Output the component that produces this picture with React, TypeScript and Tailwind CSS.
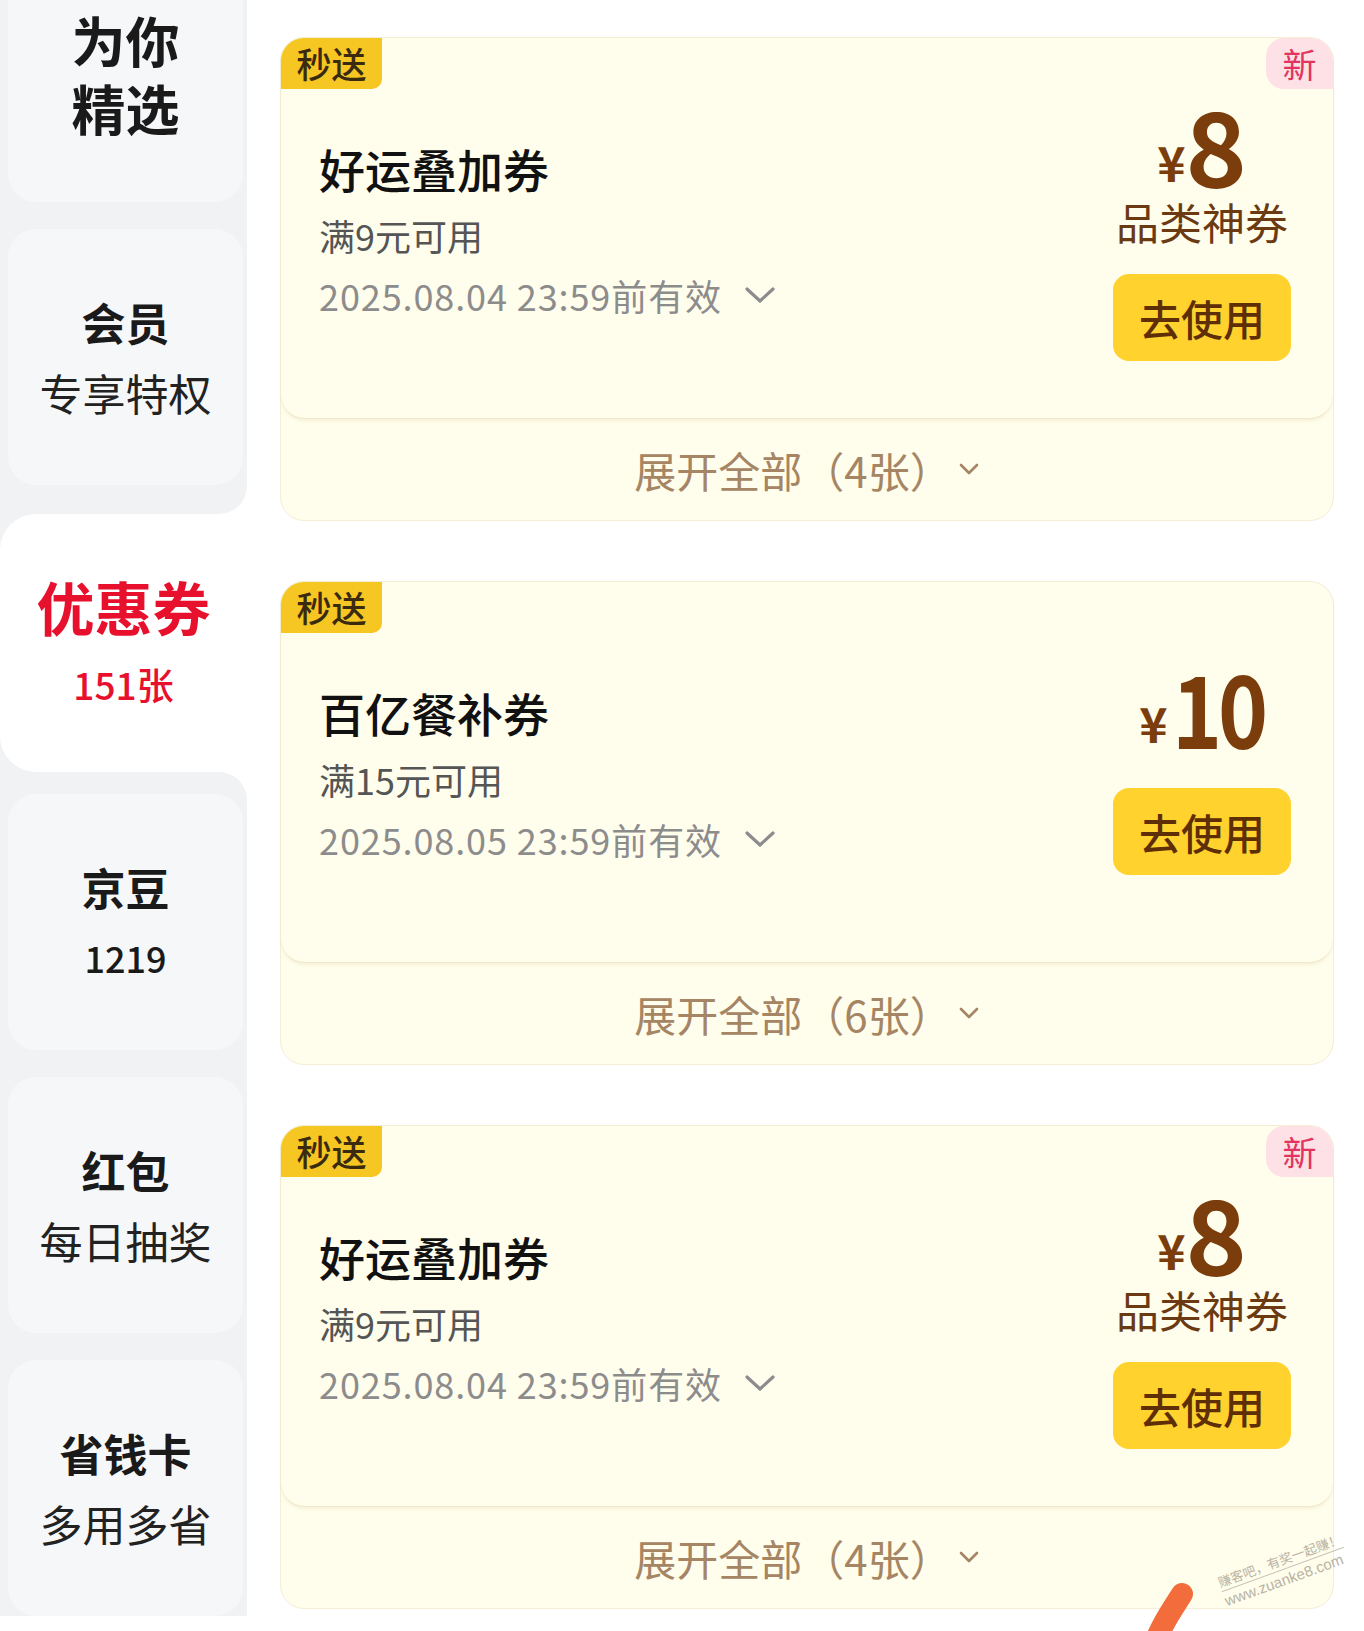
import React from "react";

type Coupon = {
  title: string;
  cond: string;
  date: string;
  amount: string;
  label?: string;
  isNew?: boolean;
  count: number;
};

const coupons: Coupon[] = [
  { title: "好运叠加券", cond: "满9元可用", date: "2025.08.04 23:59前有效", amount: "8", label: "品类神券", isNew: true, count: 4 },
  { title: "百亿餐补券", cond: "满15元可用", date: "2025.08.05 23:59前有效", amount: "10", count: 6 },
  { title: "好运叠加券", cond: "满9元可用", date: "2025.08.04 23:59前有效", amount: "8", label: "品类神券", isNew: true, count: 4 },
];

function SideCard({ title, sub, className = "" }: { title: string; sub: string; className?: string }) {
  return (
    <div className={`flex h-[256px] w-[235px] flex-col items-center justify-center rounded-[28px] bg-[#f6f7f9] ${className}`}>
      <div className="text-[44px] font-bold leading-[56px] text-[#1a1a1a]">{title}</div>
      <div className="mt-[14px] text-[43px] leading-[56px] text-[#222]">{sub}</div>
    </div>
  );
}

function Sidebar() {
  return (
    <div className="flex w-[247px] shrink-0 flex-col bg-white">
      <div className="rounded-br-[28px] bg-[#f1f2f4] pb-[29px] pl-2">
        <div className="-mt-[54px] flex h-[256px] w-[235px] items-center justify-center rounded-[28px] bg-[#f6f7f9] text-center text-[54px] font-bold leading-[68px] text-[#1a1a1a]">
          为你
          <br />
          精选
        </div>
        <SideCard title="会员" sub="专享特权" className="mt-[27px]" />
      </div>
      <div className="bg-[#f1f2f4]">
        <div className="flex h-[258px] flex-col items-center justify-center rounded-l-[36px] bg-white pb-[6px]">
          <div className="text-[58px] font-bold leading-[66px] text-[#e8112d]">优惠券</div>
          <div className="mt-[21px] text-[37px] font-medium leading-[48px] text-[#e8112d]">151张</div>
        </div>
      </div>
      <div className="flex flex-col gap-[27px] rounded-tr-[28px] bg-[#f1f2f4] pl-2 pt-[22px]">
        <div className="flex h-[256px] w-[235px] flex-col items-center justify-center rounded-[28px] bg-[#f6f7f9]">
          <div className="text-[44px] font-bold leading-[56px] text-[#1a1a1a]">京豆</div>
          <div className="mt-[14px] text-[36px] font-medium leading-[56px] text-[#1a1a1a]">1219</div>
        </div>
        <SideCard title="红包" sub="每日抽奖" />
        <SideCard title="省钱卡" sub="多用多省" />
      </div>
    </div>
  );
}

function CouponGroup({ c }: { c: Coupon }) {
  const wide = c.amount.length > 1;
  return (
    <div className="rounded-[24px] border border-[#f3eed5] bg-[#fffdec]">
      <div className="relative flex h-[381px] items-center justify-between rounded-[24px] border-b border-[#efe9cc] bg-[#fffdec] shadow-[0_2px_3px_rgba(220,205,150,0.25)]">
        <div className="absolute left-0 top-0 flex h-[51px] w-[101px] items-center justify-center rounded-br-[10px] rounded-tl-[23px] bg-[#f6c623] text-[35px] font-medium text-[#3a2a10]">
          秒送
        </div>
        {c.isNew && (
          <div className="absolute right-0 top-0 flex h-[51px] w-[67px] items-center justify-center rounded-l-[18px] rounded-tr-[23px] bg-[#fde1e7] text-[34px] text-[#e2345f]">
            新
          </div>
        )}
        <div className="flex flex-col pl-[38px]">
          <div className="text-[46px] font-medium leading-[58px] text-[#111]">{c.title}</div>
          <div className="mt-[15px] text-[36px] leading-[46px] text-[#555]">{c.cond}</div>
          <div className="mt-[14px] flex items-center text-[36px] leading-[46px] tracking-[0.9px] text-[#8c8c8c]">
            <span>{c.date}</span>
            <svg width="32" height="18" viewBox="0 0 32 18" className="ml-[22px]">
              <polyline points="3,3 16,15 29,3" fill="none" stroke="#8c8c8c" strokeWidth="3.2" strokeLinecap="round" strokeLinejoin="round" />
            </svg>
          </div>
        </div>
        <div className={`mr-[42px] flex w-[178px] flex-col items-center ${wide ? "mb-[12px]" : ""}`}>
          <div className={`font-bold leading-[96px] text-[#7a3d0b] ${c.label ? "-mb-[33px]" : "-mb-[30px]"}`}>
            <span className="align-[6px] text-[48px]">¥</span>
            {wide ? (
              <span className="-mr-[15px] ml-[4px] inline-block origin-left scale-x-85 text-[100px] tracking-[-5px]">{c.amount}</span>
            ) : (
              <span className="text-[104px]">{c.amount}</span>
            )}
          </div>
          {c.label && <div className="text-[43px] leading-[50px] text-[#6b3a12]">{c.label}</div>}
          <div className="mt-[28px] flex h-[87px] w-[178px] items-center justify-center rounded-[16px] bg-[#ffd22e] text-[42px] font-medium text-[#5e2e07]">
            去使用
          </div>
        </div>
      </div>
      <div className="flex h-[101px] items-center justify-center text-[42px] text-[#a58563]">
        <span>展开全部（{c.count}张）</span>
        <svg width="22" height="13" viewBox="0 0 22 13" className="ml-[6px]">
          <polyline points="3,2 11,10 19,2" fill="none" stroke="#a58563" strokeWidth="2.6" strokeLinecap="round" strokeLinejoin="round" />
        </svg>
      </div>
    </div>
  );
}

export default function App() {
  return (
    <div className="relative flex h-[1631px] w-[1364px] overflow-hidden bg-white font-['Noto_Sans_CJK_SC',sans-serif]">
      <Sidebar />
      <div className="flex flex-1 flex-col gap-[60px] pl-[33px] pr-[30px] pt-[37px]">
        {coupons.map((c, i) => (
          <CouponGroup key={i} c={c} />
        ))}
      </div>
      <svg width="60" height="60" viewBox="0 0 60 60" className="absolute left-[1142px] top-[1580px]">
        <path d="M40 14 C30 30 22 40 14 60" fill="none" stroke="#f26c3c" strokeWidth="22" strokeLinecap="round" />
      </svg>
      <div className="absolute left-[1218px] top-[1552px] -rotate-[20deg] text-[13px] leading-[16px] text-[#b9b3a3]">
        <div className="border-b border-[#c8c2b3] pb-[1px]">赚客吧，有奖一起赚！</div>
        <div className="mt-[2px] font-['Liberation_Sans'] text-[15px]">www.zuanke8.com</div>
      </div>
    </div>
  );
}
